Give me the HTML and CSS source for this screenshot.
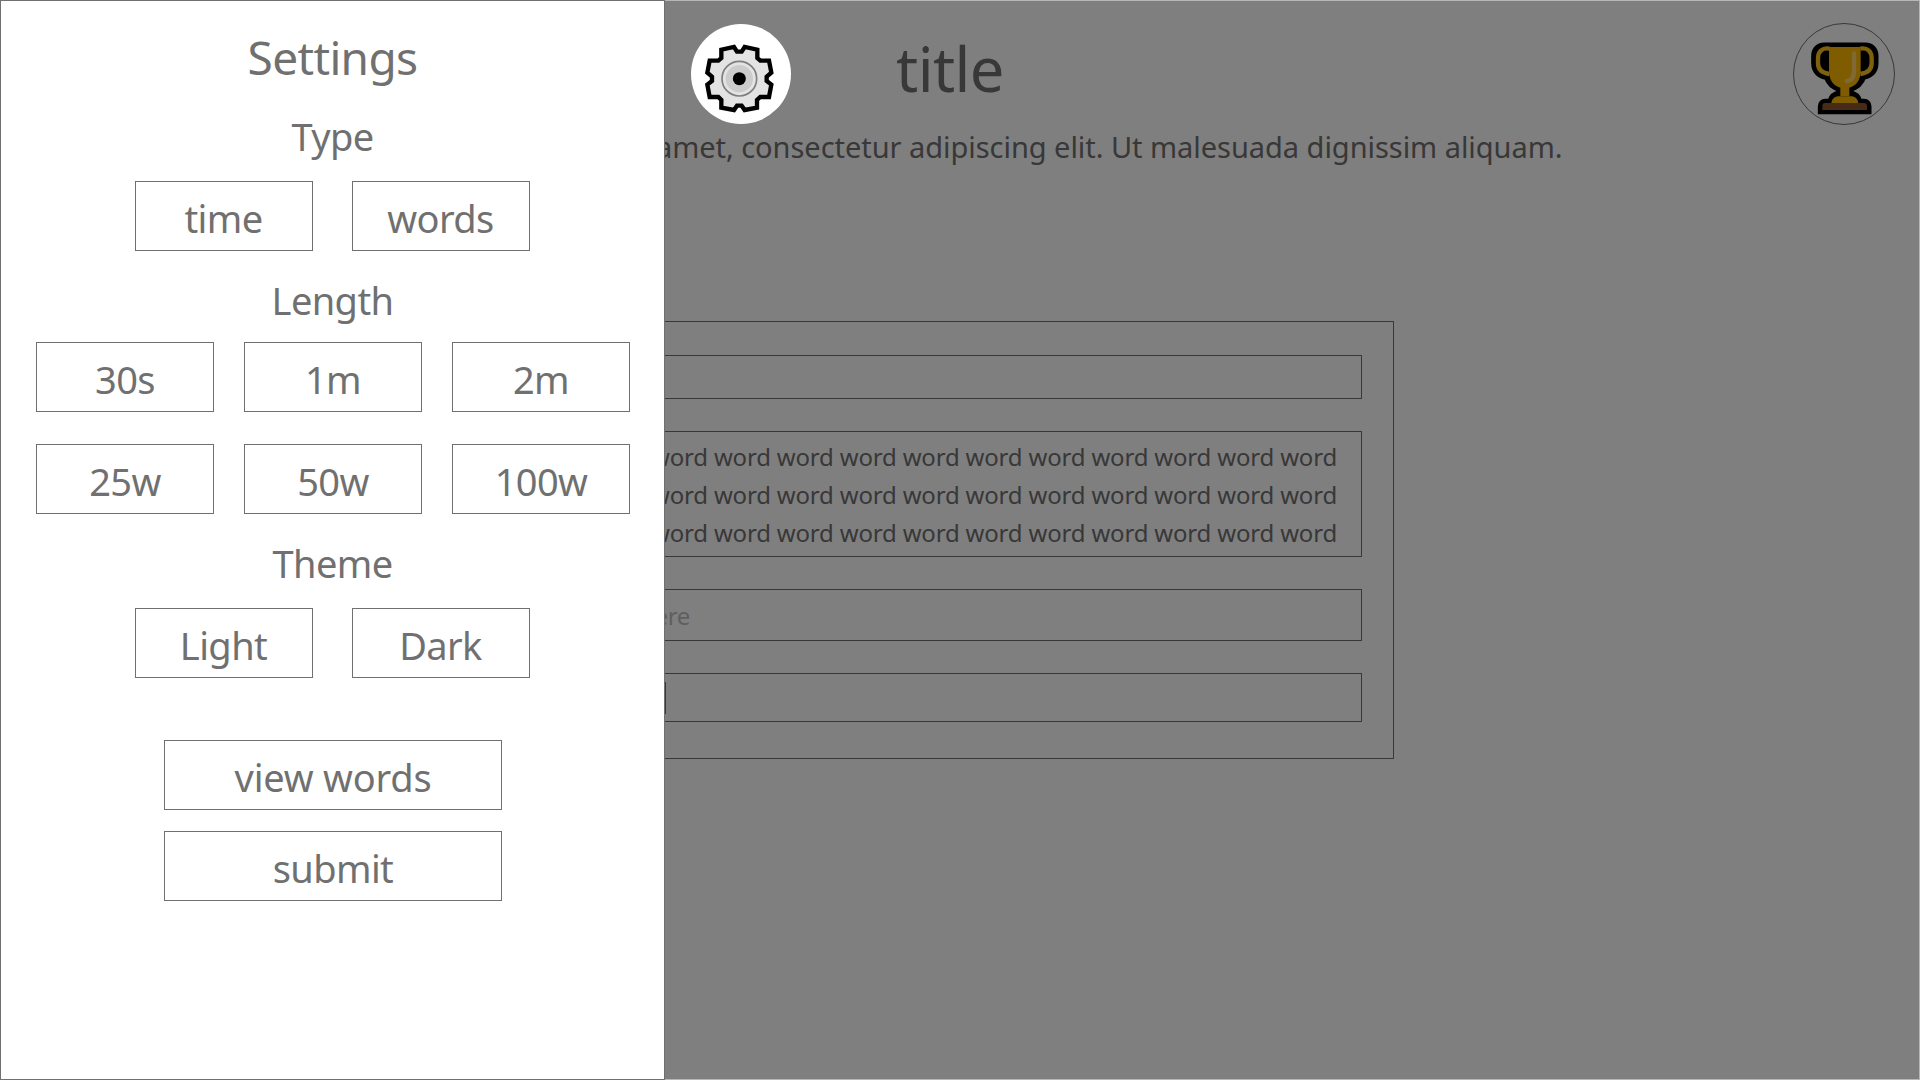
FILE: index.html
```html
<!DOCTYPE html>
<html lang="en">
<head>
<meta charset="utf-8">
<title>title</title>
<link rel="stylesheet" href="styles.css">
</head>
<body>
<div class="page">
  <main class="main">
    <h1 class="title">title</h1>
    <p class="description">sit amet, consectetur adipiscing elit. Ut malesuada dignissim aliquam.</p>
    <section class="game">
      <div class="box status"></div>
      <div class="box words">
        <p class="line">word word word word word word word word word word word word</p>
        <p class="line">word word word word word word word word word word word word</p>
        <p class="line">word word word word word word word word word word word word</p>
      </div>
      <div class="box entry"><span class="placeholder">type here</span></div>
      <div class="box results"><span class="half"></span><span class="half"></span></div>
    </section>
  </main>
  <div class="round trophy">
    <svg viewBox="0 0 306 306" width="102" height="102">
      <g transform="translate(-39 -39)">
        <circle cx="192" cy="192" r="151.5" fill="#fff" stroke="#707070" stroke-width="3"/>
        <g fill="#000" stroke="#000" stroke-width="27" stroke-linejoin="round">
          <path d="M133 111H256C273 111 282 122 282 138V160C282 182 268 194 246 197C241 214 228 227 208 232V255C222 256 232 264 234 279H155C157 264 167 256 181 255V232C161 227 149 214 144 197C122 194 107 182 107 160V138C107 122 116 111 133 111Z"/>
          <path d="M136 280H252Q261 280 261 289V299H127V289Q127 280 136 280Z" stroke-linejoin="miter"/>
        </g>
        <path d="M148 116C128 112 114 124 114 145V160C114 178 126 189 148 192" fill="none" stroke="#ffc21a" stroke-width="13"/>
        <path d="M241 116C262 112 275 124 275 145V160C275 178 263 189 241 192" fill="none" stroke="#ffc21a" stroke-width="13"/>
        <path d="M147 111H242V184C242 209 229 228 208 233V259H181V233C160 228 147 209 147 184Z" fill="#ffb900"/>
        <path d="M154 279C156 266 164 259 177 259H212C225 259 233 266 235 279Z" fill="#ffb900"/>
        <path d="M222 130V180C222 200 216 212 201 213" fill="none" stroke="#ffd56b" stroke-width="13" stroke-linecap="round"/>
        <path d="M136 279H252Q261 279 261 288V300H127V288Q127 279 136 279Z" fill="#8e562e"/>
      </g>
    </svg>
  </div>
  <div class="overlay"></div>
  <aside class="settings">
    <h2 class="heading">Settings</h2>
    <h3 class="subheading type">Type</h3>
    <div class="pair"><button class="btn">time</button><button class="btn">words</button></div>
    <h3 class="subheading">Length</h3>
    <div class="grid">
      <button class="btn">30s</button><button class="btn">1m</button><button class="btn">2m</button>
      <button class="btn">25w</button><button class="btn">50w</button><button class="btn">100w</button>
    </div>
    <h3 class="subheading">Theme</h3>
    <div class="pair theme"><button class="btn">Light</button><button class="btn">Dark</button></div>
    <div class="actions"><button class="btn wide view">view words</button><button class="btn wide">submit</button></div>
  </aside>
  <div class="round gear">
    <svg viewBox="0 0 300 300" width="100" height="100">
      <g transform="translate(-33 -41)">
        <circle cx="183" cy="191" r="150" fill="#fff"/>
        <path d="M171 124H185L194 110L232 118V143L241 151H267L274 187L260 199V212L274 223L267 260H241L231 269V292L194 299L185 286H171L162 299L124 292V269L115 260H89L82 223L96 212V199L82 187L89 151H115L124 143V118L162 110Z" fill="#e3e3e3" stroke="#000" stroke-width="13"/>
        <circle cx="178" cy="205" r="52" fill="#e3e3e3" stroke="#7f7f7f" stroke-width="5"/>
        <circle cx="178" cy="205" r="41" fill="#ccc"/>
        <circle cx="178" cy="205" r="19.500" fill="#000"/>
      </g>
    </svg>
  </div>
</div>
</body>
</html>
```
FILE: styles.css
```css
* { box-sizing: border-box; }
body { margin: 0; font-family: "Segoe UI", "Noto Sans", "Open Sans", sans-serif; color: #707070; background: #fff; }
h1, h2, h3, p { margin: 0; font-weight: 400; }

.page { position: relative; width: 1920px; height: 1080px; overflow: hidden; background: #fff; }
.main { display: flex; flex-direction: column; align-items: center; padding: 28px 20px 0 0; }
.title { font-size: 61.5px; line-height: 80px; letter-spacing: -0.6px; }
.description { width: 1225px; margin-top: 19px; font-size: 29px; line-height: 40px; letter-spacing: -0.04px; text-align: right; white-space: nowrap; }

.game { display: flex; flex-direction: column; gap: 32px; width: 888px; height: 438px; margin-top: 154px; padding: 33px 31px 0 32px; border: 1px solid #707070; }
.box { border: 1px solid #707070; }
.status { height: 44px; }
.words { height: 126px; padding: 6px 24px 0 0; }
.line { font-size: 24px; line-height: 38px; letter-spacing: -0.18px; text-align: right; white-space: nowrap; }
.entry { height: 52px; }
.placeholder { display: block; width: 150px; font-size: 24px; line-height: 52px; letter-spacing: -0.3px; text-align: right; color: #bebebe; }
.results { display: flex; height: 49px; padding: 8px 0 7px; }
.half:first-child { width: 126px; border-right: 1px solid #707070; }

.round { position: absolute; }
.round svg { display: block; }
.trophy { left: 1793px; top: 23px; }
.gear { left: 691px; top: 24px; }
.overlay { position: absolute; inset: 0; background: rgba(0, 0, 0, .5); border: 1px solid rgba(112, 112, 112, .5); background-clip: padding-box; }

.settings { position: absolute; left: 0; top: 0; display: flex; flex-direction: column; align-items: center; width: 665px; height: 1080px; padding-top: 26px; border: 1px solid #707070; background: #fff; }
.heading { font-size: 46px; line-height: 60px; letter-spacing: -0.65px; }
.subheading { margin-top: 24px; font-size: 38px; line-height: 50px; letter-spacing: -0.6px; }
.btn { width: 178px; height: 70px; padding: 4px 0 0; border: 1px solid #707070; background: #fff; color: #707070; font-family: inherit; font-size: 38px; line-height: 64px; letter-spacing: -0.6px; }
.pair { display: flex; gap: 39px; margin: 20px 1px 0 0; }
.grid { display: grid; grid-template-columns: repeat(3, 178px); gap: 32px 30px; margin: 17px 0 0 1px; }
.actions { display: flex; flex-direction: column; gap: 21px; margin: 62px 0 0 1px; }
.wide { width: 338px; }
.view { letter-spacing: -0.2px; }
```
